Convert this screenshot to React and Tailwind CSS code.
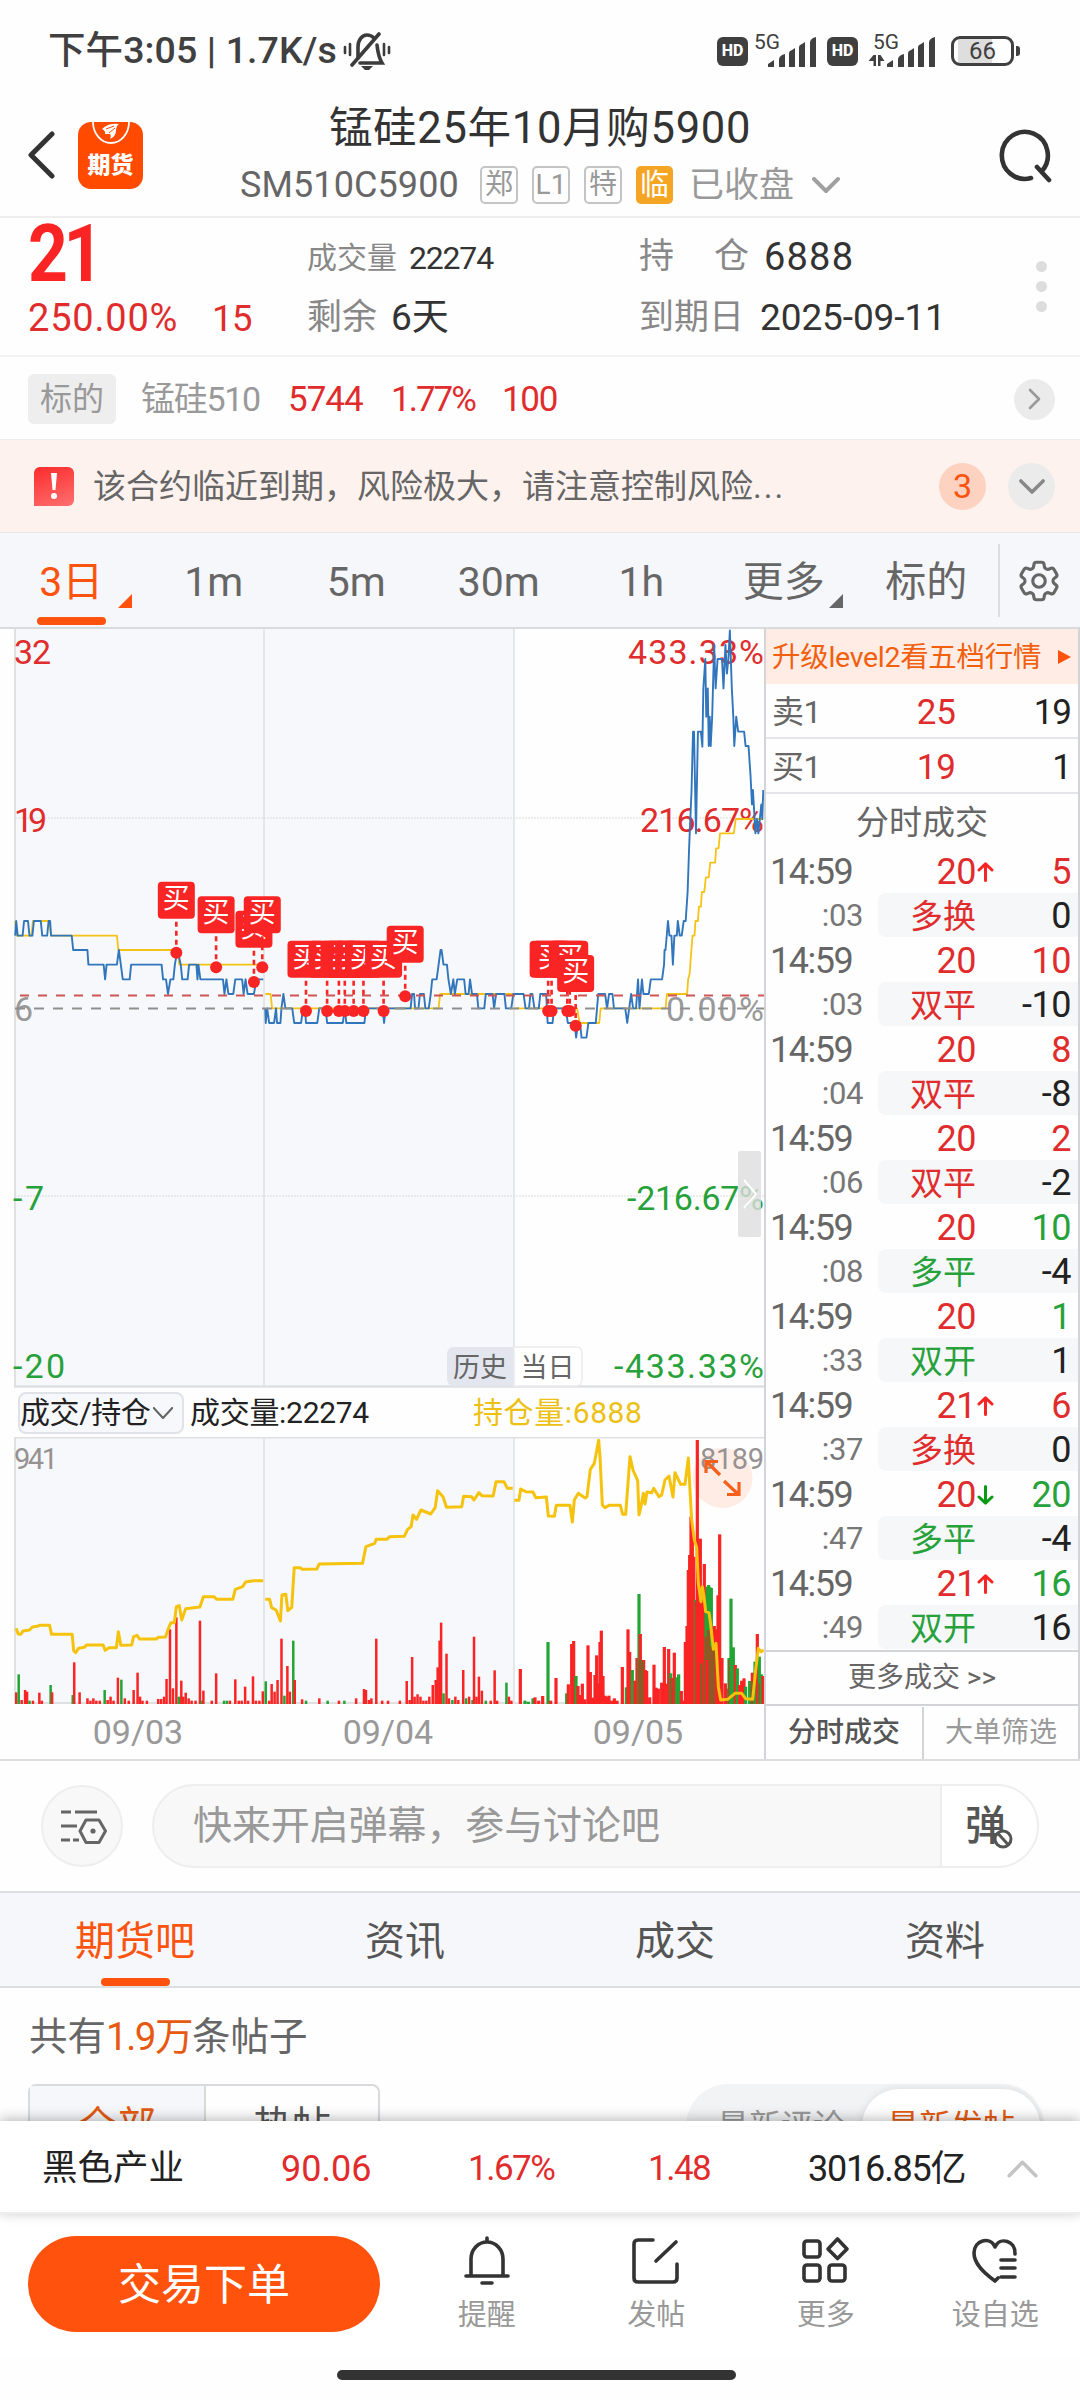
import React from "react";
import { HiOutlineCog6Tooth } from "react-icons/hi2";

/* ---------- chart data ---------- */

const BLUE =
  "M31 947 L33 903 L36 947 L46 947 L49 903 L57 903 L60 947 L66 947 L69 903 L83 903 L86 947 L96 947 L99 903 L102 903 L104 947 L146 947 L149 990 L178 990 L180 1034 L211 1034 L214 1078 L217 1034 L238 1034 L242 990 L246 1034 L250 1078 L264 1078 L267 1034 L329 1034 L332 1078 L338 1078 L342 1122 L347 1078 L353 1078 L356 1034 L360 1000 L363 1000 L368 1034 L371 1078 L382 1078 L385 1034 L400 1034 L402 1078 L404 1034 L408 1078 L454 1078 L457 1122 L461 1078 L465 1122 L475 1122 L479 1078 L493 1078 L496 1122 L500 1078 L504 1122 L517 1122 L522 1078 L536 1078 " +
  "M540 1165 L541 1209 L544 1165 L548 1209 L558 1209 L562 1165 L564 1209 L571 1209 L573 1165 L577 1122 L581 1165 L595 1165 L599 1209 L613 1209 L617 1165 L621 1165 L623 1209 L646 1209 L650 1165 L663 1165 L666 1209 L698 1209 L702 1165 L705 1209 L742 1209 L745 1165 L779 1165 L782 1209 L785 1165 L836 1165 L839 1122 L843 1122 L845 1165 L852 1165 L855 1122 L863 1122 L866 1165 L873 1165 L877 1122 L880 1078 L889 1078 L893 1034 L897 990 L899 990 L903 1034 L910 1034 L913 1078 L918 1122 L923 1078 L926 1122 L931 1078 L945 1078 L948 1122 L954 1122 L957 1078 L961 1122 L971 1122 L974 1165 L986 1165 L989 1122 L1003 1122 L1006 1165 L1010 1122 L1027 1122 L1030 1165 L1041 1165 L1045 1122 L1066 1122 L1070 1165 L1077 1165 L1080 1122 L1084 1122 L1088 1165 L1097 1165 L1100 1122 L1112 1122 L1115 1209 L1125 1209 L1128 1165 L1152 1165 L1156 1209 L1170 1209 L1173 1253 L1177 1209 L1181 1209 L1184 1253 L1194 1253 L1198 1209 L1213 1209 L1218 1122 L1232 1122 L1236 1165 L1240 1122 L1247 1122 L1250 1165 L1273 1165 L1277 1209 L1281 1165 L1285 1122 L1289 1165 L1295 1165 L1299 1078 L1302 1165 L1307 1078 L1310 1122 L1321 1122 L1325 1078 L1348 1078 L1352 1034 L1353 990 L1355 990 L1360 903 L1363 947 L1367 947 L1370 1034 L1373 947 L1378 947 L1380 903 L1384 947 L1388 947 L1392 903 L1396 903 L1400 816 L1403 685 L1408 510 L1411 335 L1413 335 L1417 640 L1421 335 L1427 335 L1430 380 L1432 205 L1436 117 L1438 290 L1441 205 L1443 378 L1445 290 L1447 378 L1450 290 L1454 74 L1457 205 L1461 117 L1470 117 L1473 205 L1477 74 L1480 161 L1483 117 L1486 31 L1490 205 L1493 290 L1495 378 L1499 290 L1503 335 L1515 335 L1518 378 L1524 378 L1528 465 L1531 553 L1533 510 L1538 640 L1541 597 L1544 640 L1547 597 L1550 553 L1552 597 L1554 510";

const AVG =
  "M31 903 L34 947 L64 947 L67 903 L100 903 L104 947 L238 947 L241 990 L362 990 L365 1034 L536 1034 M540 1122 L551 1122 L554 1165 L893 1165 L896 1122 L1046 1122 M1048 1165 L1175 1165 L1180 1209 L1220 1209 L1223 1165 L1355 1165 L1358 1122 L1399 1122 L1401 1078 L1404 1062 L1410 947 L1414 947 L1416 903 L1421 903 L1423 860 L1427 860 L1429 816 L1434 816 L1437 772 L1443 772 L1446 728 L1456 728 L1458 685 L1463 685 L1466 640 L1494 640 L1498 597 L1554 597";

const MARKERS = [
  [359, 785, 998], [440, 829, 1042], [517, 872, 1086], [534, 829, 1042],
  [623, 962, 1173], [666, 962, 1173], [690, 962, 1173], [702, 962, 1173],
  [720, 962, 1173], [740, 962, 1173], [781, 962, 1173], [825, 917, 1129],
  [1116, 962, 1173], [1123, 962, 1173], [1155, 962, 1173], [1160, 962, 1173],
  [1172, 1005, 1217],
].map(([x, top, dot]) => ({ x: x / 2.036, top: top / 3 - 9, dot: dot / 3 - 9 }));

const parseBars = (s) =>
  s.split(",").map((b) => {
    const [a, h] = b.trim().split(" ");
    return { color: a[0], x: Number(a.slice(1)), top: Number(h) };
  });

const BAR_COLORS = { R: "#f92424", G: "#22a535", B: "#8d5a26" };

const BARS_EARLY = parseBars(
  "R33 937,G38 883,R44 960,R51 930,R55 935,G60 962,R67 962,R80 938,R85 962,G103 915,R106 937,G148 945,R151 847,R162 937,R178 955,R184 962,R190 955,R196 962,R203 962,G213 930,R219 960,R225 950,R231 962,R240 893,G247 899,R254 955,R262 962,R272 930,R280 878,R285 950,R290 962,R299 962,R322 957,R328 957,R334 950,R339 897,R346 748,R352 925,R359 712,G364 950,R369 902,R373 950,R378 938,R384 955,R390 962,R398 962,R407 722,G411 962,R414 932,R431 962,R440 880,G456 962,G462 962,R468 962,R479 898,R486 962,R492 962,R499 920,R505 962,R515 889,R521 962,R528 962,R535 934,G541 904,R548 962,R553 912,R559 935,R565 900,R573 776,G579 947,R585 858,R590 935,G597 782,R600 900,R615 958,G623 962,R650 955,G667 962,R690 962,G701 962,R725 955,R741 927,R745 930,R751 960,R756 955,R766 776,R778 962,R790 962,R814 962,R828 903,R834 960,R839 831,R844 950,R850 943,R856 950,R862 962,R868 962,R874 950,R881 915,R887 900,R891 862,R895 782,R898 728,G903 940,R909 821,R914 955,G921 960,R927 950,R933 960,R943 870,G949 955,R955 950,G962 960,R965 770,R970 950,R975 890,R981 932,G989 962,R999 962,R1007 871,R1012 962,G1031 908,R1036 950,R1041 962"
).map((b) => ({ ...b, x: b.x / 2.036, top: b.top / 3 - 57 }));

const BARS_TODAY = parseBars(
  "R46 717,G60 812,G70 815,G84 805,R90 802,R101 812,R113 798,G129 636,R137 812,R153 744,G185 790,R190 763,R200 642,R206 633,G213 738,R219 768,R226 795,R232 761,R240 808,R249 646,R256 726,R263 803,R270 735,R275 676,R280 760,R285 636,R289 602,R294 738,R300 797,R306 800,R312 797,R320 812,R328 805,R336 812,R352 711,G364 772,R369 598,R374 666,G382 720,R390 752,R396 684,G402 492,R406 612,G411 690,R416 690,B404 690,B412 695,R421 720,R425 723,R434 802,R447 704,R453 773,R460 776,R470 758,R478 651,R485 761,R491 657,G497 730,R502 744,R508 668,B498 745,G515 742,G521 733,R529 783,R536 812,R541 636,R546 588,R550 420,R554 375,R558 260,R562 300,R566 380,G571 510,R574 515,R582 515,R577 30,R586 326,R590 480,B590 700,R598 402,G603 540,G607 470,G611 465,G615 472,G619 474,B603 620,B610 600,R606 690,B617 650,R628 588,R633 598,B625 660,R639 496,R644 313,R651 684,R661 760,R668 776,G672 684,B674 690,G678 506,G685 652,R691 705,G697 715,R704 765,R710 752,R717 745,G722 770,G734 753,R742 728,B742 755,G750 695,R757 612,G763 680,B765 760,G769 733,R774 738"
).map((b) => ({ ...b, x: 505 + b.x / 3, top: b.top / 3 - 7 }));

const OI_EARLY =
  "M33 745 L37 762 L42 763 L47 753 L60 750 L66 741 L76 739 L80 736 L101 736 L105 763 L147 763 L150 812 L154 818 L160 805 L172 802 L176 795 L210 795 L214 811 L222 803 L237 803 L241 755 L246 796 L268 795 L272 770 L279 766 L284 777 L318 777 L322 772 L337 771 L343 745 L348 728 L355 728 L359 680 L365 677 L370 720 L378 686 L407 681 L414 650 L436 650 L441 658 L474 658 L479 628 L494 620 L500 606 L516 602 L536 602 M540 658 L549 658 L553 683 L562 690 L571 723 L574 645 L582 643 L586 692 L594 682 L599 563 L611 563 L615 568 L645 567 L650 552 L738 550 L745 500 L763 490 L766 478 L788 478 L793 470 L823 469 L830 448 L837 440 L841 405 L848 418 L857 390 L877 402 L886 383 L891 332 L902 350 L909 382 L940 380 L944 349 L960 350 L965 360 L975 338 L981 347 L1004 348 L1010 305 L1026 305 L1033 325 L1044 325";

const OI_TODAY =
  "M28 211 L42 211 L47 177 L62 185 L84 186 L92 203 L124 201 L130 258 L148 259 L154 226 L195 226 L202 276 L208 210 L220 190 L240 204 L246 200 L256 118 L268 100 L281 31 L285 80 L292 225 L300 233 L312 226 L346 226 L353 253 L362 253 L375 80 L384 120 L398 152 L402 255 L408 230 L415 190 L420 222 L426 186 L440 188 L446 175 L462 200 L470 195 L480 150 L492 138 L504 201 L510 128 L527 163 L540 163 L550 84 L556 200 L560 270 L568 330 L575 352 L580 460 L588 515 L592 470 L597 500 L602 545 L612 548 L616 575 L625 658 L633 640 L640 770 L647 810 L668 808 L690 790 L710 790 L722 806 L743 808 L752 720 L760 655 L768 665 L776 660";

const TRADES = [
  ["20", "up", "5", "r", ":03", "多换", "r", "0"],
  ["20", "", "10", "r", ":03", "双平", "r", "-10"],
  ["20", "", "8", "r", ":04", "双平", "r", "-8"],
  ["20", "", "2", "r", ":06", "双平", "r", "-2"],
  ["20", "", "10", "g", ":08", "多平", "g", "-4"],
  ["20", "", "1", "g", ":33", "双开", "g", "1"],
  ["21", "up", "6", "r", ":37", "多换", "r", "0"],
  ["20", "down", "20", "g", ":47", "多平", "g", "-4"],
  ["21", "up", "16", "g", ":49", "双开", "g", "16"],
];

const toneClass = { r: "text-[#e02c2c]", g: "text-[#27a13a]" };

/* ---------- icons ---------- */

function MutedBell() {
  return (
    <svg className="ml-[6px] h-[38px] w-[48px]" viewBox="0 0 48 38" fill="none" stroke="#3c3c3c" strokeWidth="3.600" strokeLinecap="round">
      <path d="M15 26 V15 C15 8 19 3 24 3 C27 3 29 4 31 6" />
      <path d="M34 13 C35 22 36 26 39 31 H17" />
      <path d="M36 2 L9 33" />
      <path d="M18 34 H30 L26 38 H22 Z" fill="#3c3c3c" stroke="none" />
      <path d="M7 12 V23 M2 15 V21 M41 12 V23 M46 15 V21" strokeWidth="2.600" />
    </svg>
  );
}

function HdBadge({ className }) {
  return (
    <div className={"flex h-[29px] w-[31px] items-center justify-center rounded-[6px] bg-[#3f3f3f] text-[16px] font-extrabold leading-none text-white " + className}>
      HD
    </div>
  );
}

function Signal({ arrows, className }) {
  return (
    <svg className={"h-[36px] w-[64px] overflow-visible " + className} viewBox="0 0 64 36">
      <text x="0" y="15.500" fontSize="20" fill="#404040" textLength="26" lengthAdjust="spacingAndGlyphs">5G</text>
      <g fill="#404040">
        <path d="M14 34 V31 L20 27 V34 Z" />
        <path d="M25 34 V26 Q25 24 28 22 L31 21 V34 Z" />
        <path d="M35 34 V20 Q35 18 38 17 L41 15 V34 Z" />
        <path d="M45 34 V14 Q45 12 48 11 L51 9 V34 Z" />
        <path d="M56 34 V9 Q56 7 59 5 L62 4 V34 Z" />
        {arrows && <path d="M3.500 33 V28 H-1.500 L3.500 22 H6 V33 Z M8 22 H10.500 L14.500 28 H10.500 V33 H8 Z" transform="translate(-3,0)" />}
      </g>
    </svg>
  );
}

function AppLogo() {
  return (
    <div className="ml-[23px] mt-[46px] flex h-[67px] w-[65px] flex-col items-center overflow-hidden rounded-[13px] bg-[#ff4a00]">
      <svg className="h-[23px] w-[40px]" viewBox="0 0 40 23" fill="none">
        <path d="M2 0 A18 21 0 0 0 38 0" stroke="#fff" strokeWidth="1.8" />
        <path d="M11 7 Q17 1 28 2 Q25 4 25 9 Q25 14 19 17 Q21 12 18 12 L14 12 Q15 9 11 7 Z" fill="#fff" />
        <path d="M15 7 L23 4 M18 11 L24 6" stroke="#ff4a00" strokeWidth="1" />
      </svg>
      <div className="mt-[9px] text-[23px] font-black leading-[24px] text-white">期货</div>
    </div>
  );
}

function SearchIcon() {
  return (
    <svg className="ml-[61px] mt-[53px] h-[54px] w-[54px]" viewBox="0 0 54 54" fill="none" stroke="#333" strokeWidth="4.600" strokeLinecap="round">
      <path d="M33 49 A23 23.500 0 1 1 44 42" />
      <path d="M39 38 L51 51" />
    </svg>
  );
}

function Chevron({ className, d, stroke, width }) {
  return (
    <svg className={className} viewBox="0 0 28 16" fill="none" stroke={stroke} strokeWidth={width} strokeLinecap="round" strokeLinejoin="round">
      <path d={d} />
    </svg>
  );
}

function TradeArrow({ dir }) {
  if (!dir) return <div className="w-[18px]" />;
  return (
    <svg className="ml-[1px] h-[20px] w-[17px]" viewBox="0 0 17 20" fill="none" stroke={dir === "up" ? "#f92424" : "#0a9a14"} strokeWidth="3" strokeLinecap="round" strokeLinejoin="round">
      <path d={dir === "up" ? "M8.500 18.500 V2 M2 8 L8.500 1.800 L15 8" : "M8.500 1.500 V18 M2 12 L8.500 18.200 L15 12"} />
    </svg>
  );
}

/* ---------- charts ---------- */

function PriceChart() {
  return (
    <svg className="block h-[759px] w-[764px]" viewBox="0 0 764 759" fontSize="34">
      <rect x="15" y="0" width="499" height="758" fill="#f7f8fb" />
      <g stroke="#dfe0e2" strokeWidth="2">
        <path d="M15 0 V758" />
        <path d="M264 0 V758" strokeWidth="1.500" />
        <path d="M514 0 V758" strokeWidth="1.500" />
        <path d="M14 757.500 H764" strokeWidth="2.400" />
      </g>
      <path d="M15 189 H764 M15 567 H764" stroke="#d9dadc" strokeWidth="1" strokeDasharray="2 1" />
      <g fill="#e02c2c">
        <text x="14" y="35" textLength="37">32</text>
        <text x="14" y="203" textLength="33">19</text>
        <text x="764" y="35" textAnchor="end" textLength="136">433.33%</text>
        <text x="764" y="203" textAnchor="end" textLength="124">216.67%</text>
      </g>
      <g fill="#999">
        <text x="14" y="392">6</text>
        <text x="764" y="392" textAnchor="end" textLength="98">0.00%</text>
      </g>
      <g fill="#27a13a">
        <text x="13" y="581" textLength="31">-7</text>
        <text x="13" y="749" textLength="52">-20</text>
        <text x="764" y="581" textAnchor="end" textLength="137">-216.67%</text>
        <text x="764" y="749" textAnchor="end" textLength="150">-433.33%</text>
      </g>
      <g fill="none" strokeLinejoin="round" transform="translate(0,-9) scale(0.49116,0.33333)">
        <path d={AVG} stroke="#f5c318" strokeWidth="1.800" vectorEffect="non-scaling-stroke" />
        <path d={BLUE} stroke="#3176bd" strokeWidth="1.900" vectorEffect="non-scaling-stroke" />
      </g>
      <path d="M20 366.500 H764" stroke="#d05555" strokeWidth="1.800" strokeDasharray="9 9" />
      <path d="M15 379.500 H764" stroke="#8f8f8f" strokeWidth="1.800" strokeDasharray="10 9" />
      {MARKERS.map((m, i) => (
        <g key={i}>
          <path d={`M${m.x} ${m.top + 40} V${m.dot}`} stroke="#f92424" strokeWidth="2.600" strokeDasharray="5 4" />
          <circle cx={m.x} cy={m.dot} r="6" fill="#f92424" />
          <rect x={m.x - 18.500} y={m.top} width="37" height="37" rx="4" fill="#f92424" />
          <text x={m.x} y={m.top + 26} fontSize="27" fill="#fff" textAnchor="middle">买</text>
        </g>
      ))}
      <path d="M447 726 Q447 718 454 718 H514 V757 H454 Q447 757 447 750 Z" fill="#e3e6ef" />
      <path d="M514 718 H576 Q582 718 582 724 V750 Q582 757 576 757 H514 Z" fill="#fff" stroke="#ececef" strokeWidth="1.500" />
      <g fontSize="27" fill="#666" textAnchor="middle">
        <text x="480" y="748" textLength="54">历史</text>
        <text x="547.500" y="748" textLength="54">当日</text>
      </g>
      <rect x="738" y="522" width="23" height="86" rx="2" fill="#dddddd" fillOpacity="0.8" />
      <path d="M744 551 L756 565 L744 579" stroke="#fff" strokeWidth="2" fill="none" />
    </svg>
  );
}

function VolumeChart() {
  return (
    <svg className="block h-[267px] w-[764px]" viewBox="0 0 764 267" fontSize="29">
      <rect x="15" y="0" width="499" height="266" fill="#f7f8fb" />
      <g stroke="#dfe0e2" strokeWidth="2">
        <path d="M14 0.500 H764" />
        <path d="M15 0 V266" />
        <path d="M264 0 V266" strokeWidth="1.500" />
        <path d="M514 0 V266" strokeWidth="1.500" />
        <path d="M14 266 H764" />
      </g>
      <circle cx="722.500" cy="41" r="30" fill="#ffece5" />
      {BARS_EARLY.map((b, i) => (
        <rect key={i} x={b.x - 1.200} y={b.top} width="2.500" height={267 - b.top} fill={BAR_COLORS[b.color]} />
      ))}
      {BARS_TODAY.map((b, i) => (
        <rect key={i} x={b.x - 1.600} y={b.top} width="3.200" height={267 - b.top} fill={BAR_COLORS[b.color]} />
      ))}
      <g fill="none" stroke="#f5c30d" strokeLinejoin="round" strokeWidth="3">
        <path d={OI_EARLY} transform="translate(0,-57) scale(0.49116,0.33333)" vectorEffect="non-scaling-stroke" />
        <path d={OI_TODAY} transform="translate(505,-7) scale(0.33333)" vectorEffect="non-scaling-stroke" />
      </g>
      <g fill="#969292">
        <text x="14" y="32" textLength="44">941</text>
        <text x="764" y="32" textAnchor="end" textLength="64">8189</text>
      </g>
      <path d="M720 38 L707 25 M706 36 V24.500 H718 M724 44 L738 57 M739 45 V57.500 H727" stroke="#f7601c" strokeWidth="3.200" fill="none" />
    </svg>
  );
}

/* ---------- sections ---------- */

function StatusBar() {
  return (
    <div className="flex h-[76px] items-center pt-[26px] text-[#404040]">
      <div className="ml-[48px] whitespace-nowrap text-[37.5px] font-medium leading-none tracking-[0.1px]">下午3:05 | 1.7K/s</div>
      <MutedBell />
      <div className="ml-auto flex items-center">
        <HdBadge className="" />
        <Signal className="ml-[6px]" />
        <HdBadge className="ml-[9px]" />
        <Signal className="ml-[15px]" arrows />
        <div className="relative ml-[14px] flex h-[30px] w-[63px] items-center justify-center rounded-[9px] border-[3px] border-[#404040] bg-[linear-gradient(90deg,#fff_4px,#dedede_4px,#dedede_38px,#fff_38px)] text-[24px] leading-none">
          66
        </div>
        <div className="ml-[2px] mr-[60px] h-[10px] w-[4px] rounded-r-[3px] bg-[#404040]" />
      </div>
    </div>
  );
}

function TagBox({ children }) {
  return (
    <div className="flex h-[38px] w-[38px] items-center justify-center rounded-[5px] border-2 border-[#c4c4c4] text-[28px] leading-none text-[#999]">
      {children}
    </div>
  );
}

function Header() {
  return (
    <div className="flex h-[142px] items-start border-b-2 border-[#eeeeee]">
      <svg className="ml-[27px] mt-[55px] h-[48px] w-[28px]" viewBox="0 0 28 48" fill="none" stroke="#333" strokeWidth="5" strokeLinecap="round" strokeLinejoin="round">
        <path d="M25 3 L4 24 L25 45" />
      </svg>
      <AppLogo />
      <div className="mt-[25px] flex w-[794px] flex-col items-center">
        <div className="flex h-[56px] items-center whitespace-nowrap text-[43.5px] leading-none tracking-[0.7px] text-[#333]">锰硅25年10月购5900</div>
        <div className="flex h-[56px] items-center leading-none">
          <span className="w-[220px] whitespace-nowrap text-[36px] tracking-[0.1px] text-[#666]">SM510C5900</span>
          <div className="ml-[20px] flex gap-[14px]">
            <TagBox>郑</TagBox>
            <TagBox>L1</TagBox>
            <TagBox>特</TagBox>
            <div className="flex h-[38px] w-[37px] items-center justify-center rounded-[5px] bg-[#f5a524] text-[29px] text-white">临</div>
          </div>
          <span className="ml-[16px] text-[35px] text-[#999]">已收盘</span>
          <Chevron className="ml-[18px] h-[16px] w-[28px]" d="M2 2 L14 14 L26 2" stroke="#a0a0a0" width="3.900" />
        </div>
      </div>
      <SearchIcon />
    </div>
  );
}

function Quote() {
  return (
    <div className="flex h-[139px] border-b-2 border-[#f2f2f2] leading-none">
      <div className="w-[278px] pl-[28px]">
        <div className="flex h-[72px] items-center">
          <span className="origin-left scale-x-[0.87] text-[80px] font-bold tracking-[-5px] text-[#fb2424]">21</span>
        </div>
        <div className="flex h-[56px] items-center text-[37px] tracking-[0.8px] text-[#e02c2c]">
          <span className="w-[184px] text-[38px]">250.00%</span>
          <span className="tracking-[-1px]">15</span>
        </div>
      </div>
      <div className="w-[332px] pl-[29px] pt-[11px]">
        <div className="flex h-[57px] items-center text-[#333]">
          <span className="text-[30px] text-[#888]">成交量</span>
          <span className="ml-[12px] text-[32px] tracking-[-1.200px]">22274</span>
        </div>
        <div className="flex h-[63px] items-center text-[#333]">
          <span className="text-[35px] text-[#888]">剩余</span>
          <span className="ml-[14px] text-[37px]">6天</span>
        </div>
      </div>
      <div className="w-[426px] pl-[29px] pt-[11px]">
        <div className="flex h-[55px] items-center text-[#333]">
          <span className="flex w-[110px] justify-between text-[35px] text-[#888]"><span>持</span><span>仓</span></span>
          <span className="ml-[15px] text-[38px] tracking-[1.200px]">6888</span>
        </div>
        <div className="flex h-[67px] items-center whitespace-nowrap text-[#333]">
          <span className="w-[106px] text-[35px] text-[#888]">到期日</span>
          <span className="ml-[15px] text-[37px] tracking-[-0.1px]">2025-09-11</span>
        </div>
      </div>
      <div className="flex flex-col gap-[9px] pt-[43px]">
        <i className="block h-[11px] w-[11px] rounded-full bg-[#dddddd]" />
        <i className="block h-[11px] w-[11px] rounded-full bg-[#dddddd]" />
        <i className="block h-[11px] w-[11px] rounded-full bg-[#dddddd]" />
      </div>
    </div>
  );
}

function Underlying() {
  return (
    <div className="flex h-[83px] items-center border-b border-[#ececec] pl-[28px] pr-[25px] pt-[2px] leading-none">
      <div className="flex h-[50px] w-[88px] items-center justify-center rounded-[6px] bg-[#eeeeee] text-[32px] text-[#999]">标的</div>
      <span className="ml-[25px] w-[147px] whitespace-nowrap text-[34px] tracking-[-1.300px] text-[#999]">锰硅510</span>
      <span className="w-[103px] text-[35px] tracking-[-1px] text-[#e02c2c]">5744</span>
      <span className="w-[111px] text-[35px] tracking-[-2px] text-[#e02c2c]">1.77%</span>
      <span className="text-[35px] tracking-[-1.300px] text-[#e02c2c]">100</span>
      <div className="ml-auto flex h-[41px] w-[41px] items-center justify-center rounded-full bg-[#ebebeb]">
        <svg className="h-[22px] w-[13px]" viewBox="0 0 13 22" fill="none" stroke="#999" strokeWidth="2.600" strokeLinecap="round" strokeLinejoin="round">
          <path d="M2 2 L11 11 L2 20" />
        </svg>
      </div>
    </div>
  );
}

function Warning() {
  return (
    <div className="flex h-[93px] items-center border-b border-[#e8e8ea] bg-[#fdf2ee] pl-[34px] pr-[25px] leading-none">
      <div className="flex h-[39px] w-[40px] items-center justify-center rounded-[6px] rounded-bl-none bg-[linear-gradient(160deg,#fb2b2b,#ff7070)]">
        <svg className="h-[28px] w-[8px]" viewBox="0 0 8 28" fill="#fff">
          <path d="M1 1 H7 L5.500 18 H2.500 Z" />
          <circle cx="4" cy="24" r="3" />
        </svg>
      </div>
      <span className="ml-[19px] whitespace-nowrap text-[33px] text-[#666]">该合约临近到期，风险极大，请注意控制风险<span className="tracking-[2px]">...</span></span>
      <div className="ml-auto flex h-[47px] w-[47px] items-center justify-center rounded-full bg-[#fdd2c0] text-[34px] text-[#fb5410]">3</div>
      <div className="ml-[22px] flex h-[47px] w-[47px] items-center justify-center rounded-full bg-[#ebebeb]">
        <Chevron className="h-[15px] w-[26px]" d="M2 2 L14 14 L26 2" stroke="#888" width="3.800" />
      </div>
    </div>
  );
}

function PeriodTab({ label, active, menu }) {
  return (
    <div className="relative flex h-full w-[142.5px] items-center justify-center pt-[4px]">
      <span className={active ? "text-[41px] text-[#fb5410]" : "text-[41px] text-[#666]"}>{label}</span>
      {menu && (
        <svg className={active ? "absolute bottom-[19px] right-[10px] h-[14px] w-[15px]" : "absolute bottom-[19px] right-[11px] h-[14px] w-[15px]"} viewBox="0 0 15 14">
          <path d="M14 0 V14 H0 Z" fill={active ? "#ff530d" : "#666"} />
        </svg>
      )}
      {active && <div className="absolute bottom-[2px] left-[37px] h-[8px] w-[69px] rounded-[4px] bg-[#ff530d]" />}
    </div>
  );
}

function PeriodTabs() {
  return (
    <div className="flex h-[96px] items-center border-b-2 border-[#d8dade] bg-[#f6f7fa] leading-none">
      <div className="flex h-full items-center">
        <PeriodTab label="3日" active menu />
        <PeriodTab label="1m" />
        <PeriodTab label="5m" />
        <PeriodTab label="30m" />
        <PeriodTab label="1h" />
        <PeriodTab label="更多" menu />
        <PeriodTab label="标的" />
      </div>
      <div className="h-[73px] w-[2px] bg-[#dcdee2]" />
      <HiOutlineCog6Tooth className="ml-[14px] mt-[2px] h-[50px] w-[50px] text-[#666]" />
    </div>
  );
}

function OrderRow({ side, price, size }) {
  return (
    <div className="flex h-[55px] items-center border-b-2 border-[#e3e5ea] pl-[6px] pr-[7px] pt-[3px]">
      <span className="w-[80px] text-[32px] tracking-[-0.6px] text-[#666]">{side}</span>
      <span className="w-[104px] text-right text-[35px] text-[#e02c2c]">{price}</span>
      <span className="flex-1 text-right text-[35px] tracking-[-1px] text-[#222]">{size}</span>
    </div>
  );
}

function TradePanel() {
  return (
    <div className="flex w-[316px] flex-col border-x-2 border-[#d3d4d8] leading-none">
      <div className="flex h-[55px] items-center bg-[#ffece5] pl-[6px] pt-[3px] text-[28.5px] text-[#f2600f]">
        <span className="w-[286px] whitespace-nowrap tracking-[-0.3px]">升级level2看五档行情</span>
        <svg className="mb-[2px] h-[14px] w-[13px]" viewBox="0 0 13 14"><path d="M0 0 L13 7 L0 14 Z" fill="#ff530d" /></svg>
      </div>
      <OrderRow side="卖1" price="25" size="19" />
      <OrderRow side="买1" price="19" size="1" />
      <div className="flex h-[55px] items-center justify-center pt-[2px] text-[33px] text-[#666]">分时成交</div>
      {TRADES.map(([price, dir, vol, volTone, sec, kind, kindTone, delta], i) => (
        <div key={i} className="h-[89px]">
          <div className="flex h-[44px] items-center pr-[7px] pt-[2px]">
            <span className="w-[120px] pl-[4px] text-[36px] tracking-[-1.500px] text-[#666]">14:59</span>
            <span className="w-[90px] text-right text-[36px] tracking-[-0.5px] text-[#e02c2c]">{price}</span>
            <TradeArrow dir={dir} />
            <span className={"flex-1 text-right text-[36px] tracking-[-0.5px] " + toneClass[volTone]}>{vol}</span>
          </div>
          <div className="flex h-[44px] items-center">
            <span className="w-[97px] text-right text-[31px] tracking-[-0.4px] text-[#777]">{sec}</span>
            <div className="ml-[15px] flex h-full flex-1 items-center rounded-l-[8px] bg-[#f6f7f9] pl-[32px] pr-[7px] pt-[2px]">
              <span className={"w-[70px] text-[33px] " + toneClass[kindTone]}>{kind}</span>
              <span className="flex-1 text-right text-[36px] tracking-[-0.5px] text-[#222]">{delta}</span>
            </div>
          </div>
        </div>
      ))}
      <div className="flex h-[54px] items-center justify-center border-t-2 border-[#d3d4d8] text-[28px] text-[#666]">更多成交 &gt;&gt;</div>
      <div className="flex flex-1 border-t-2 border-[#d3d4d8] pt-px text-[28px]">
        <div className="flex w-[158px] items-center justify-center border-r-2 border-[#d3d4d8] font-medium text-[#555]">分时成交</div>
        <div className="flex flex-1 items-center justify-center text-[#999]">大单筛选</div>
      </div>
    </div>
  );
}

function ChartArea() {
  return (
    <div className="flex h-[1132px] border-b-2 border-[#dcdee2]">
      <div className="w-[764px]">
        <PriceChart />
        <div className="flex h-[49px] items-center whitespace-nowrap text-[30px] leading-none">
          <div className="ml-[18px] flex h-[42px] w-[166px] items-center rounded-[8px] border-2 border-[#dfe2e8] bg-[#f7f8fb] text-[#222]">
            <span className="w-[133px] tracking-[-0.4px]">成交/持仓</span>
            <Chevron className="h-[12px] w-[20px]" d="M1 1 L14 15 L27 1" stroke="#666" width="3" />
          </div>
          <span className="ml-[6px] w-[283px] tracking-[-0.3px] text-[#222]">成交量:22274</span>
          <span className="tracking-[0.6px] text-[#edc014]">持仓量:6888</span>
        </div>
        <VolumeChart />
        <div className="ml-[13px] flex h-[56px] items-center text-[34px] leading-none text-[#999]">
          <span className="w-[250px] text-center">09/03</span>
          <span className="w-[250px] text-center">09/04</span>
          <span className="w-[250px] text-center">09/05</span>
        </div>
      </div>
      <TradePanel />
    </div>
  );
}

function DanmakuBar() {
  return (
    <div className="flex h-[132px] items-center border-b-2 border-[#dcdee2] pl-[41px] pr-[41px] leading-none">
      <div className="flex h-[82px] w-[82px] items-center justify-center rounded-full border-2 border-[#eeeeee] bg-[#f8f8f8]">
        <svg className="ml-[3px] mt-[2px] h-[38px] w-[46px]" viewBox="0 0 46 38" fill="none" stroke="#666" strokeWidth="3">
          <path d="M0 4 H10 M14 4 H36 M0 18 H16 M0 32 H9 M12 32 H18" />
          <path d="M25 12 H38 L44.500 23 L38 34.500 H25 L19 23 Z" strokeLinejoin="round" />
          <circle cx="32" cy="23" r="2.600" fill="#666" stroke="none" />
        </svg>
      </div>
      <div className="ml-[29px] flex h-[84px] flex-1 items-center overflow-hidden rounded-full border-2 border-[#eeeeee] bg-[#f8f8f8]">
        <span className="flex-1 whitespace-nowrap pl-[39px] text-[39px] tracking-[-0.1px] text-[#999]">快来开启弹幕，参与讨论吧</span>
        <div className="relative flex h-full w-[97px] items-center border-l-2 border-[#eeeeee] bg-white pl-[23px]">
          <span className="text-[41px] font-medium text-[#555]">弹</span>
          <svg className="absolute left-[50px] top-[42px] h-[22px] w-[22px]" viewBox="0 0 22 22" fill="none" stroke="#555" strokeWidth="3">
            <circle cx="11" cy="11" r="8" fill="#fff" />
            <path d="M6 5.500 L16 16.500" />
          </svg>
        </div>
      </div>
    </div>
  );
}

function ForumTabs() {
  return (
    <div className="grid h-[95px] grid-cols-4 border-b-2 border-[#dcdee2] bg-[#f6f7fa] text-[40px] leading-none text-[#555]">
      <div className="relative flex items-center justify-center pt-[5px] text-[#fb5410]">
        期货吧
        <div className="absolute bottom-0 left-[101px] h-[8px] w-[69px] rounded-[4px] bg-[#ff530d]" />
      </div>
      <div className="flex items-center justify-center pt-[5px]">资讯</div>
      <div className="flex items-center justify-center pt-[5px]">成交</div>
      <div className="flex items-center justify-center pt-[5px]">资料</div>
    </div>
  );
}

function Posts() {
  return (
    <div className="h-[133px] overflow-hidden leading-none">
      <div className="flex h-[96px] items-center whitespace-nowrap pl-[29px] pt-[2px] text-[38.5px] text-[#666]">
        共有<span className="tracking-[-1.500px] text-[#e55a10]">1.9万</span>条帖子
      </div>
      <div className="flex h-[84px] justify-between pl-[28px] pr-[36px]">
        <div className="flex w-[352px] rounded-[8px] border-2 border-[#d8dade] text-[39px]">
          <div className="flex w-[176px] items-center justify-center border-r-2 border-[#d8dade] bg-[#f6f7fa] text-[#e55a10]">全部</div>
          <div className="flex flex-1 items-center justify-center text-[#555]">热帖</div>
        </div>
        <div className="flex w-[358px] items-center rounded-full bg-[#f2f3f5] text-[32px] text-[#999]">
          <span className="w-[176px] pl-[31px]">最新评论</span>
          <div className="flex h-[74px] w-[178px] items-center justify-center rounded-full bg-white text-[#e55a10] shadow-[0_0_8px_rgba(0,0,0,0.1)]">最新发帖</div>
        </div>
      </div>
    </div>
  );
}

function SectorRow() {
  return (
    <div className="relative flex h-[93px] items-center border-b-2 border-[#eeeeee] bg-white pl-[42px] pt-[4px] text-[36px] leading-none text-[#222] shadow-[0_-2px_12px_rgba(0,0,0,0.28)]">
      <span className="w-[239px] text-[35.5px]">黑色产业</span>
      <span className="w-[187px] tracking-[0px] text-[#e02c2c]">90.06</span>
      <span className="w-[180px] text-[35px] tracking-[-1.500px] text-[#e02c2c]">1.67%</span>
      <span className="w-[160px] text-[35px] tracking-[-1.500px] text-[#e02c2c]">1.48</span>
      <span className="w-[199px] tracking-[-1.200px]">3016.85亿</span>
      <Chevron className="h-[18px] w-[31px]" d="M2 14 L14 2 L26 14" stroke="#c4c4c4" width="3.200" />
    </div>
  );
}

function BottomItem({ label, children }) {
  return (
    <div className="flex w-[169.5px] flex-col items-center">
      <svg className="h-[50px] w-[50px]" viewBox="0 0 50 50" fill="none" stroke="#333" strokeWidth="3.600" strokeLinecap="round" strokeLinejoin="round">
        {children}
      </svg>
      <div className="mt-[15px] text-[29px] leading-none text-[#999]">{label}</div>
    </div>
  );
}

function BottomBar() {
  return (
    <div className="flex h-[142px] items-start bg-white pl-[28px] pt-[22px]">
      <div className="flex h-[96px] w-[352px] items-center justify-center rounded-full bg-[#ff530d] text-[43px] leading-none text-white">
        <span className="mt-[2px]">交易下单</span>
      </div>
      <div className="ml-[22px] flex">
        <BottomItem label="提醒">
          <path d="M25 2 V6 M9 39 V23 A16 17 0 0 1 41 23 V39 M4 40 H46 M20 47 H30" />
        </BottomItem>
        <BottomItem label="发帖">
          <path d="M22 4 H7 Q3 4 3 8 V42 Q3 46 7 46 H42 Q46 46 46 42 V28 M25 25 L45 6" />
        </BottomItem>
        <BottomItem label="更多">
          <rect x="3" y="5" width="16" height="16" rx="3" />
          <rect x="3" y="29" width="16" height="16" rx="3" />
          <rect x="28" y="29" width="16" height="16" rx="3" />
          <path d="M36.500 3 L46 13 L36.500 22.500 L27 13 Z" />
        </BottomItem>
        <BottomItem label="设自选">
          <path d="M25 45 C14 37 4 28 4 17 C4 4 20 0 25 11 C30 0 46 5 45 18 M31 24 H45 M31 32 H45 M31 41 H45 M25 45 L28 42" />
        </BottomItem>
      </div>
    </div>
  );
}

export default function App() {
  return (
    <div className="h-[2400px] w-[1080px] overflow-hidden bg-[#fefefe] font-[Roboto,'Noto_Sans_CJK_SC',sans-serif]">
      <StatusBar />
      <Header />
      <Quote />
      <Underlying />
      <Warning />
      <PeriodTabs />
      <ChartArea />
      <DanmakuBar />
      <ForumTabs />
      <Posts />
      <SectorRow />
      <BottomBar />
      <div className="ml-[337px] mt-[14px] h-[10px] w-[399px] rounded-full bg-[#333]" />
    </div>
  );
}
